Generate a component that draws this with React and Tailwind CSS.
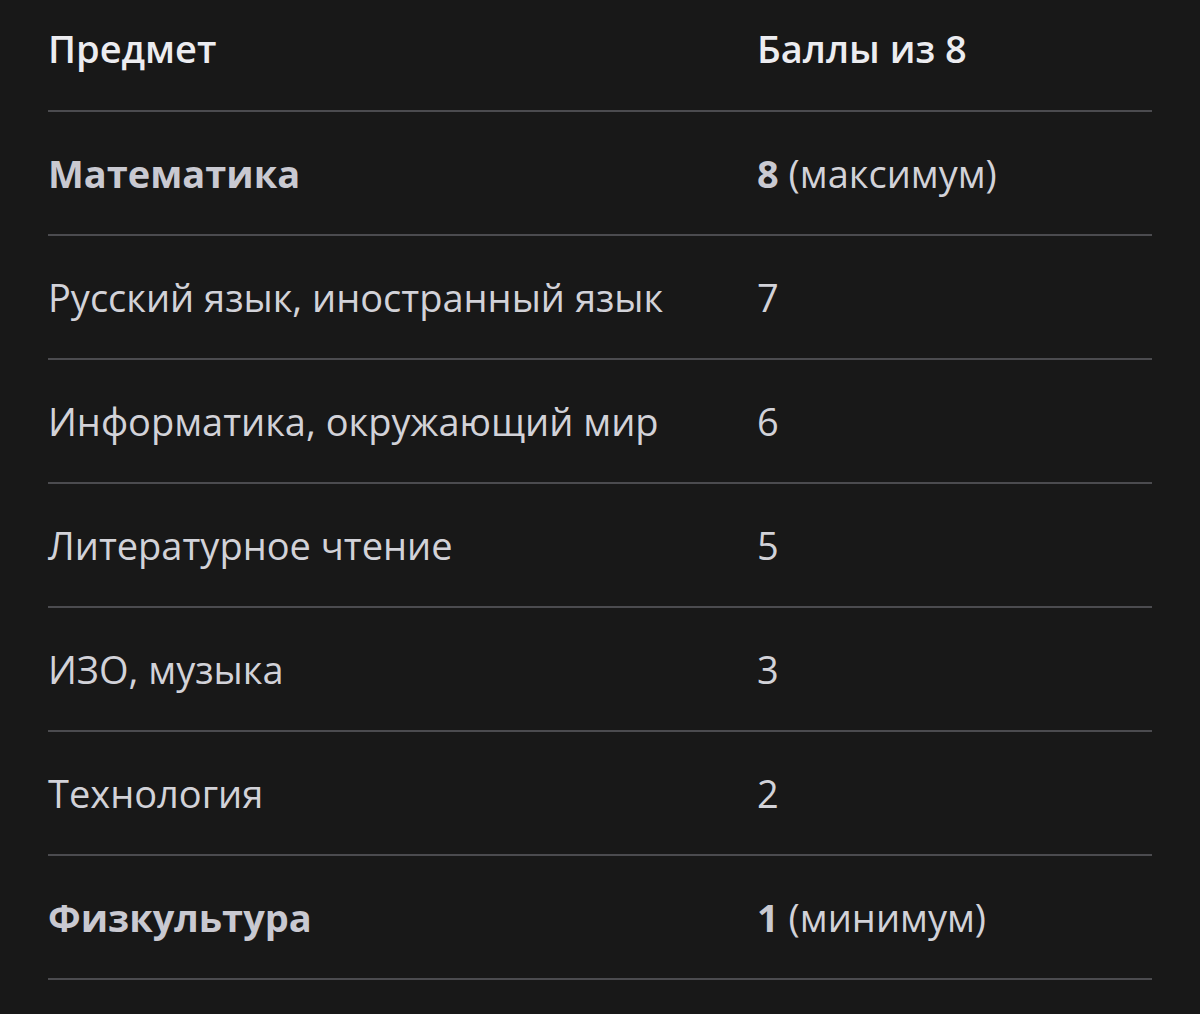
import React from "react";

const rows = [
	{ subject: "Математика", score: "8", note: "(максимум)", bold: true },
	{ subject: "Русский язык, иностранный язык", score: "7" },
	{ subject: "Информатика, окружающий мир", score: "6" },
	{ subject: "Литературное чтение", score: "5" },
	{ subject: "ИЗО, музыка", score: "3" },
	{ subject: "Технология", score: "2" },
	{ subject: "Физкультура", score: "1", note: "(минимум)", bold: true },
];

export default function App() {
	return (
		<div
			className="min-h-[1014px] bg-[#181818] text-[#d2d2d8] px-12"
			style={{ fontFamily: '"Open Sans", sans-serif' }}
		>
			<table className="w-full border-collapse text-[38px]">
				<thead>
					<tr className="border-b-2 border-[#4b4b4f]">
						<th className="h-[111px] pb-[14px] text-left font-semibold text-[#ececf0] w-[709px]">
							Предмет
						</th>
						<th className="h-[111px] pb-[14px] text-left font-semibold text-[#ececf0]">
							Баллы из 8
						</th>
					</tr>
				</thead>
				<tbody>
					{rows.map((r) => (
						<tr key={r.subject} className="border-b-2 border-[#4b4b4f]">
							<td
								className={
									r.bold
										? "h-[124px] font-bold text-[#c9c9d1]"
										: "h-[124px]"
								}
							>
								{r.subject}
							</td>
							<td className="h-[124px]">
								{r.bold ? (
									<>
										<strong className="font-bold text-[#c9c9d1]">
											{r.score}
										</strong>{" "}
										{r.note}
									</>
								) : (
									r.score
								)}
							</td>
						</tr>
					))}
				</tbody>
			</table>
		</div>
	);
}
